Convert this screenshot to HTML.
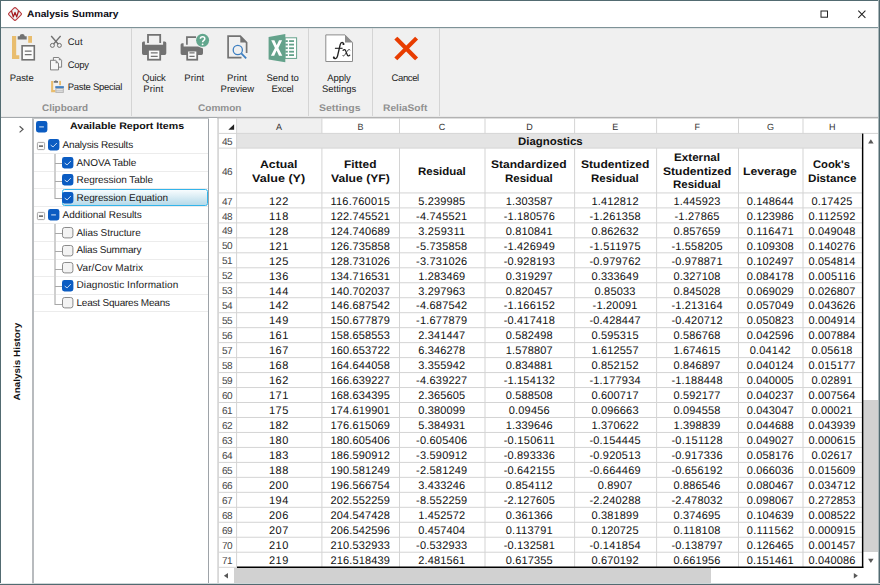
<!DOCTYPE html>
<html><head><meta charset="utf-8"><title>Analysis Summary</title>
<style>
html,body{margin:0;padding:0;}
body{width:880px;height:585px;overflow:hidden;background:#fff;position:relative;font-family:"Liberation Sans",sans-serif;}
.t{position:absolute;white-space:pre;line-height:16px;height:16px;text-rendering:geometricPrecision;}
.r{position:absolute;}
svg{position:absolute;overflow:visible;}
</style></head><body>
<div class="r" style="left:0px;top:0px;width:880px;height:585px;background:#fff;"></div>
<div class="t" style="left:26.60px;top:7px;font-size:9.5px;font-weight:700;color:#0c0c14;transform-origin:0 0;transform:scaleX(1.0763);">Analysis Summary</div>
<svg style="left:0;top:0" width="30" height="28" viewBox="0 0 30 28">
<path d="M13.7 8.3 Q15 7 16.3 8.3 L20.8 12.8 Q22.1 14 20.8 15.2 L16.3 19.7 Q15 21 13.7 19.7 L9.2 15.2 Q7.9 14 9.2 12.8 Z" fill="#edf3f5" stroke="#b9393d" stroke-width="1.15"/>
<path d="M11.5 11 L13.3 16.9 L15 12.4 L16.7 16.9 L18.5 11" fill="none" stroke="#a51a1e" stroke-width="1.25" stroke-linejoin="round"/>
</svg>
<svg style="left:0;top:0" width="880" height="28" viewBox="0 0 880 28"><rect x="821" y="11" width="6.5" height="6.2" fill="none" stroke="#222" stroke-width="1"/><path d="M858.3 10.7 L865.4 17.8 M865.4 10.7 L858.3 17.8" fill="none" stroke="#222" stroke-width="1.05"/></svg>
<div class="r" style="left:1px;top:27px;width:878px;height:1px;background:#7e9297;"></div>
<div class="r" style="left:1px;top:28px;width:878px;height:89px;background:#f0f0f0;"></div>
<div class="r" style="left:1px;top:28px;width:878px;height:1px;background:#dde1e2;"></div>
<div class="r" style="left:131px;top:28px;width:1px;height:89px;background:#d4d4d4;"></div>
<div class="r" style="left:308px;top:28px;width:1px;height:89px;background:#d4d4d4;"></div>
<div class="r" style="left:372px;top:28px;width:1px;height:89px;background:#d4d4d4;"></div>
<div class="r" style="left:439px;top:28px;width:1px;height:89px;background:#d4d4d4;"></div>
<div class="r" style="left:1px;top:116px;width:878px;height:1px;background:#e8e8e8;"></div>
<div class="r" style="left:1px;top:117px;width:878px;height:1px;background:#a6aaad;"></div>
<div class="t" style="left:42.40px;top:101px;font-size:9.5px;font-weight:700;color:#909090;transform-origin:0 0;transform:scaleX(1.0399);">Clipboard</div>
<div class="t" style="left:197.50px;top:101px;font-size:9.5px;font-weight:700;color:#909090;transform-origin:0 0;transform:scaleX(1.0568);">Common</div>
<div class="t" style="left:318.80px;top:101px;font-size:9.5px;font-weight:700;color:#909090;transform-origin:0 0;transform:scaleX(1.1074);">Settings</div>
<div class="t" style="left:383.40px;top:101px;font-size:9.5px;font-weight:700;color:#909090;transform-origin:0 0;transform:scaleX(1.0784);">ReliaSoft</div>
<div class="t" style="left:9.70px;top:71px;font-size:9.5px;font-weight:400;color:#1e1e1e;letter-spacing:-0.073px;">Paste</div>
<div class="t" style="left:67.70px;top:35px;font-size:9.5px;font-weight:400;color:#1e1e1e;letter-spacing:0.058px;">Cut</div>
<div class="t" style="left:67.70px;top:58px;font-size:9.5px;font-weight:400;color:#1e1e1e;letter-spacing:-0.326px;">Copy</div>
<div class="t" style="left:67.70px;top:80px;font-size:9.5px;font-weight:400;color:#1e1e1e;letter-spacing:-0.283px;">Paste Special</div>
<div class="t" style="left:142.30px;top:71px;font-size:9.5px;font-weight:400;color:#1e1e1e;letter-spacing:-0.196px;">Quick</div>
<div class="t" style="left:143.30px;top:82px;font-size:9.5px;font-weight:400;color:#1e1e1e;letter-spacing:0.117px;">Print</div>
<div class="t" style="left:184.20px;top:71px;font-size:9.5px;font-weight:400;color:#1e1e1e;letter-spacing:0.117px;">Print</div>
<div class="t" style="left:227.10px;top:71px;font-size:9.5px;font-weight:400;color:#1e1e1e;letter-spacing:0.092px;">Print</div>
<div class="t" style="left:220.60px;top:82px;font-size:9.5px;font-weight:400;color:#1e1e1e;letter-spacing:-0.048px;">Preview</div>
<div class="t" style="left:266.60px;top:71px;font-size:9.5px;font-weight:400;color:#1e1e1e;letter-spacing:-0.108px;">Send to</div>
<div class="t" style="left:271.50px;top:82px;font-size:9.5px;font-weight:400;color:#1e1e1e;letter-spacing:-0.283px;">Excel</div>
<div class="t" style="left:327.20px;top:71px;font-size:9.5px;font-weight:400;color:#1e1e1e;letter-spacing:-0.066px;">Apply</div>
<div class="t" style="left:321.90px;top:82px;font-size:9.5px;font-weight:400;color:#1e1e1e;letter-spacing:-0.004px;">Settings</div>
<div class="t" style="left:391.60px;top:71px;font-size:9.5px;font-weight:400;color:#1e1e1e;letter-spacing:-0.394px;">Cancel</div>
<svg style="left:0;top:0" width="450" height="118" viewBox="0 0 450 118">
<!-- Paste big -->
<path d="M12 36 H16.2 V55.2 H19.3 V59 H12 Z" fill="#e9bd6e"/>
<rect x="28.2" y="36" width="3.8" height="6.8" fill="#e9bd6e"/>
<path d="M17.7 39.4 V36.2 H19.6 Q19.8 34 22.2 34 Q24.6 34 24.8 36.2 H26.7 V39.4 Z" fill="#727272"/>
<rect x="22.1" y="45.8" width="12.2" height="14" fill="#fbfbfb" stroke="#727272" stroke-width="1.6"/>
<path d="M24.8 51.2 H31.6 M24.8 54.6 H31.6" stroke="#727272" stroke-width="1.2"/>
<!-- scissors -->
<g fill="none" stroke="#6f6f6f" stroke-width="1">
<path d="M51.2 36 L58.2 44" stroke-width="1.3"/>
<path d="M60.6 36 L53.6 44" stroke-width="1.3"/>
<circle cx="52.4" cy="45.4" r="2"/>
<circle cx="59.4" cy="45.4" r="2"/>
</g>
<!-- copy -->
<g fill="#f6f6f6" stroke="#757575" stroke-width="0.9">
<path d="M53.4 57.5 H58.8 L61.6 60.3 V67.2 H53.4 Z"/>
<path d="M58.8 57.5 V60.3 H61.6 Z" fill="#8a8a8a" stroke="none"/>
<path d="M50.5 60.3 H55.6 L58.5 63.2 V69.9 H50.5 Z"/>
<path d="M55.6 60.3 V63.2 H58.5 Z" fill="#8a8a8a" stroke="none"/>
</g>
<!-- paste special -->
<path d="M51.1 80.9 H53.2 V90.1 H55.4 V92.2 H51.1 Z" fill="#e9bd6e"/>
<rect x="59.1" y="80.9" width="1.9" height="4.3" fill="#e9bd6e"/>
<path d="M53.8 82.7 V81 H54.9 Q55.9 79.6 56.9 81 H58 V82.7 Z" fill="#727272"/>
<rect x="55.4" y="86.2" width="8.4" height="6.7" fill="#b4b4b4"/>
<rect x="55.4" y="86.2" width="8.4" height="1.9" fill="#3f7fc4"/>
<rect x="56.4" y="89.1" width="6.4" height="0.8" fill="#f2f2f2"/>
<rect x="56.4" y="90.4" width="6.4" height="1.5" fill="#dedede"/>
<!-- quick print -->
<g>
<path d="M148 42.9 V34.9 H160.2 V42.9" fill="none" stroke="#727272" stroke-width="1.8"/>
<path d="M142 43 Q142 41.4 143.6 41.4 H144.9 V44.8 H163.1 V41.4 H164.7 Q166.3 41.4 166.3 43 V53.3 Q166.3 54.9 164.7 54.9 H143.6 Q142 54.9 142 53.3 Z" fill="#727272"/>
<rect x="148" y="49.7" width="12.2" height="10" fill="#fafafa" stroke="#727272" stroke-width="1.8"/>
<path d="M150.8 52.8 H157.7 M150.8 56.3 H157.7" stroke="#727272" stroke-width="1.3"/>
</g>
<!-- print -->
<g>
<path d="M186.9 44.8 V37.1 H196" fill="none" stroke="#727272" stroke-width="1.7"/>
<path d="M180.6 44.8 Q180.6 43.2 182.2 43.2 H183.6 V46.6 H198 L203 48.6 V53.3 Q203 54.9 201.4 54.9 H182.2 Q180.6 54.9 180.6 53.3 Z" fill="#727272"/>
<rect x="187.2" y="50.6" width="10" height="9.1" fill="#fafafa" stroke="#727272" stroke-width="1.8"/>
<path d="M189.4 52.9 H194.6 M189.4 56.3 H194.6" stroke="#727272" stroke-width="1.3"/>
<circle cx="202.6" cy="40.3" r="6.5" fill="#62a68d"/>
<path d="M200.4 38.7 C200.4 36.1 204.8 36.1 204.8 38.7 C204.8 40.5 202.6 40.4 202.6 42.3" fill="none" stroke="#fff" stroke-width="1.5"/><circle cx="202.6" cy="44.3" r="0.9" fill="#fff"/>
</g>
<!-- print preview -->
<g>
<path d="M246.6 53 V42.5 L240.3 36.2 H228.1 V57.7 H241.5" fill="none" stroke="#737373" stroke-width="1.7" stroke-linejoin="miter"/>
<path d="M240.3 36.2 V42.5 H246.6 Z" fill="#737373"/>
<circle cx="237.8" cy="50" r="4.6" fill="none" stroke="#3d7fc1" stroke-width="1.3"/>
<path d="M241.3 53.4 L246.2 58.3" stroke="#3d7fc1" stroke-width="1.8"/>
</g>
<!-- excel -->
<g>
<rect x="285" y="37.8" width="11.6" height="20.6" fill="#fff" stroke="#64a28b" stroke-width="1"/>
<g fill="#64a28b">
<rect x="285.3" y="40.2" width="2.5" height="1.8"/><rect x="289.1" y="40.2" width="4.9" height="1.8"/>
<rect x="285.3" y="43.7" width="2.5" height="1.8"/><rect x="289.1" y="43.7" width="4.9" height="1.8"/>
<rect x="285.3" y="47.3" width="2.5" height="1.8"/><rect x="289.1" y="47.3" width="4.9" height="1.8"/>
<rect x="285.3" y="50.8" width="2.5" height="1.8"/><rect x="289.1" y="50.8" width="4.9" height="1.8"/>
<rect x="285.3" y="54.2" width="2.5" height="1.8"/><rect x="289.1" y="54.2" width="4.9" height="1.8"/>
<path d="M268.6 37.1 L285.3 34 V62.3 L268.6 59.5 Z"/>
</g>
<path d="M271.2 40.3 H274.4 L276.7 45.3 L279 40.3 H282.1 L278.4 48 L282.3 55.7 H279 L276.6 50.6 L274.2 55.7 H270.9 L274.9 48 Z" fill="#fff"/>
</g>
<!-- fx -->
<g>
<path d="M325.8 34.9 H345 L352.5 42.4 V61.5 H325.8 Z" fill="#fff" stroke="#8c8c8c" stroke-width="1"/>
<path d="M345 34.9 V42.4 H352.5 Z" fill="#8c8c8c"/>
<path d="M343.7 44.2 C343.6 42 340.9 41.5 340.2 44.6 L337.5 56.1 C336.8 59 334.3 59.3 333.6 57.5" fill="none" stroke="#222" stroke-width="1.35" stroke-linecap="round"/>
<circle cx="343.4" cy="44" r="1" fill="#222"/><circle cx="333.9" cy="57.6" r="1" fill="#222"/>
<path d="M334.9 48.3 H342.6" stroke="#222" stroke-width="1.1"/>
<path d="M343.1 50.3 C344.4 49 345.3 49.6 345.9 51.4 L347.1 54.4 C347.7 56 348.6 56.4 349.8 55.1" fill="none" stroke="#222" stroke-width="1.25" stroke-linecap="round"/>
<path d="M350 49.9 C349.2 49 348.2 49.6 347.2 51.2 L345 54.6 C344 56.1 343.2 56.4 342.7 55.5" fill="none" stroke="#222" stroke-width="0.85" stroke-linecap="round"/>
</g>
<!-- cancel -->
<path d="M397.3 39.6 L415.1 57.4 M415.1 39.6 L397.3 57.4" stroke="#e83c00" stroke-width="4.2" stroke-linecap="square"/>
</svg>
<div class="r" style="left:1px;top:118px;width:32px;height:465px;background:#fff;"></div>
<svg style="left:0;top:0" width="40" height="140" viewBox="0 0 40 140"><path d="M19.6 126.3 L23.1 129.3 L19.6 132.4" fill="none" stroke="#555" stroke-width="1.15"/></svg>
<div class="t" style="left:0;top:0;font-size:9px;font-weight:700;color:#111;transform-origin:0 0;transform:translate(9.08px,400.4px) rotate(-90deg) scaleX(1.1003);">Analysis History</div>
<div class="r" style="left:32px;top:118px;width:2px;height:466px;background:#b8bbbe;"></div>
<div class="r" style="left:208px;top:118px;width:1px;height:466px;background:#9ea3a8;"></div>
<div class="r" style="left:32px;top:118px;width:177px;height:1px;background:#c4c7c9;"></div>
<div class="t" style="left:69.80px;top:119px;font-size:9.5px;font-weight:700;color:#111;transform-origin:0 0;transform:scaleX(1.1179);">Available Report Items</div>
<svg style="left:35.5px;top:120.6px" width="11.4" height="11.4" viewBox="0 0 11.4 11.4"><rect x="0" y="0" width="11.4" height="11.4" rx="2.4" fill="#0b5cc2"/><path d="M3.2 5.9 L7.9 5.9" fill="none" stroke="#b9d2f0" stroke-width="1.2"/></svg>
<div class="r" style="left:34px;top:153px;width:174px;height:1px;background:#ececec;"></div>
<svg style="left:37px;top:142.1px" width="8" height="8" viewBox="0 0 8 8"><rect x="0.4" y="0.4" width="7.2" height="7.2" rx="1" fill="#fafafa" stroke="#8e8e8e" stroke-width="0.8"/><path d="M2 4.1 H6" stroke="#333" stroke-width="1.2"/></svg>
<svg style="left:47.5px;top:139.0px" width="11.4" height="11.4" viewBox="0 0 11.4 11.4"><rect x="0" y="0" width="11.4" height="11.4" rx="2.4" fill="#0b5cc2"/><path d="M2.7 6.1 L5.1 7.9 L8.9 4.0" fill="none" stroke="#cfe0f5" stroke-width="0.95"/></svg>
<div class="t" style="left:62.60px;top:138px;font-size:10px;font-weight:400;color:#1a1a1a;letter-spacing:-0.184px;">Analysis Results</div>
<div class="r" style="left:34px;top:171px;width:174px;height:1px;background:#ececec;"></div>
<div class="r" style="left:54px;top:154px;width:2px;height:18px;background:#cfcfcf;"></div>
<div class="r" style="left:55px;top:163px;width:7px;height:1px;background:#a8a8a8;"></div>
<svg style="left:61.7px;top:156.7px" width="11.4" height="11.4" viewBox="0 0 11.4 11.4"><rect x="0" y="0" width="11.4" height="11.4" rx="2.4" fill="#0b5cc2"/><path d="M2.7 6.1 L5.1 7.9 L8.9 4.0" fill="none" stroke="#cfe0f5" stroke-width="0.95"/></svg>
<div class="t" style="left:76.50px;top:156px;font-size:10px;font-weight:400;color:#1a1a1a;letter-spacing:-0.052px;">ANOVA Table</div>
<div class="r" style="left:34px;top:188px;width:174px;height:1px;background:#ececec;"></div>
<div class="r" style="left:54px;top:172px;width:2px;height:18px;background:#cfcfcf;"></div>
<div class="r" style="left:55px;top:181px;width:7px;height:1px;background:#a8a8a8;"></div>
<svg style="left:61.7px;top:174.2px" width="11.4" height="11.4" viewBox="0 0 11.4 11.4"><rect x="0" y="0" width="11.4" height="11.4" rx="2.4" fill="#0b5cc2"/><path d="M2.7 6.1 L5.1 7.9 L8.9 4.0" fill="none" stroke="#cfe0f5" stroke-width="0.95"/></svg>
<div class="t" style="left:76.50px;top:173px;font-size:10px;font-weight:400;color:#1a1a1a;letter-spacing:-0.039px;">Regression Table</div>
<div class="r" style="left:34px;top:206px;width:174px;height:1px;background:#ececec;"></div>
<div class="r" style="left:61.5px;top:189px;width:146.5px;height:17px;background:#cfe6f1;box-sizing:border-box;border:1px solid #33b4ea;border-radius:2.5px;background:linear-gradient(#f8fcfe,#b6dae9);"></div>
<div class="r" style="left:54px;top:189px;width:2px;height:10px;background:#cfcfcf;"></div>
<div class="r" style="left:55px;top:198px;width:7px;height:1px;background:#a8a8a8;"></div>
<svg style="left:61.7px;top:191.8px" width="11.4" height="11.4" viewBox="0 0 11.4 11.4"><rect x="0" y="0" width="11.4" height="11.4" rx="2.4" fill="#0b5cc2"/><path d="M2.7 6.1 L5.1 7.9 L8.9 4.0" fill="none" stroke="#cfe0f5" stroke-width="0.95"/></svg>
<div class="t" style="left:76.50px;top:191px;font-size:10px;font-weight:400;color:#1a1a1a;letter-spacing:-0.074px;">Regression Equation</div>
<div class="r" style="left:34px;top:223px;width:174px;height:1px;background:#ececec;"></div>
<svg style="left:37px;top:212.3px" width="8" height="8" viewBox="0 0 8 8"><rect x="0.4" y="0.4" width="7.2" height="7.2" rx="1" fill="#fafafa" stroke="#8e8e8e" stroke-width="0.8"/><path d="M2 4.1 H6" stroke="#333" stroke-width="1.2"/></svg>
<svg style="left:47.5px;top:209.2px" width="11.4" height="11.4" viewBox="0 0 11.4 11.4"><rect x="0" y="0" width="11.4" height="11.4" rx="2.4" fill="#0b5cc2"/><path d="M3.2 5.9 L7.9 5.9" fill="none" stroke="#b9d2f0" stroke-width="1.2"/></svg>
<div class="t" style="left:62.60px;top:208px;font-size:10px;font-weight:400;color:#1a1a1a;letter-spacing:-0.050px;">Additional Results</div>
<div class="r" style="left:34px;top:241px;width:174px;height:1px;background:#ececec;"></div>
<div class="r" style="left:54px;top:224px;width:2px;height:18px;background:#cfcfcf;"></div>
<div class="r" style="left:55px;top:233px;width:7px;height:1px;background:#a8a8a8;"></div>
<svg style="left:61.7px;top:226.9px" width="11.4" height="11.4" viewBox="0 0 11.4 11.4"><rect x="0.5" y="0.5" width="10.4" height="10.4" rx="2.2" fill="#f3f3f3" stroke="#8a8a8a" stroke-width="1"/></svg>
<div class="t" style="left:76.50px;top:226px;font-size:10px;font-weight:400;color:#1a1a1a;letter-spacing:-0.059px;">Alias Structure</div>
<div class="r" style="left:34px;top:259px;width:174px;height:1px;background:#ececec;"></div>
<div class="r" style="left:54px;top:242px;width:2px;height:18px;background:#cfcfcf;"></div>
<div class="r" style="left:55px;top:251px;width:7px;height:1px;background:#a8a8a8;"></div>
<svg style="left:61.7px;top:244.5px" width="11.4" height="11.4" viewBox="0 0 11.4 11.4"><rect x="0.5" y="0.5" width="10.4" height="10.4" rx="2.2" fill="#f3f3f3" stroke="#8a8a8a" stroke-width="1"/></svg>
<div class="t" style="left:76.50px;top:243px;font-size:10px;font-weight:400;color:#1a1a1a;letter-spacing:-0.195px;">Alias Summary</div>
<div class="r" style="left:34px;top:276px;width:174px;height:1px;background:#ececec;"></div>
<div class="r" style="left:54px;top:260px;width:2px;height:18px;background:#cfcfcf;"></div>
<div class="r" style="left:55px;top:269px;width:7px;height:1px;background:#a8a8a8;"></div>
<svg style="left:61.7px;top:262.0px" width="11.4" height="11.4" viewBox="0 0 11.4 11.4"><rect x="0.5" y="0.5" width="10.4" height="10.4" rx="2.2" fill="#f3f3f3" stroke="#8a8a8a" stroke-width="1"/></svg>
<div class="t" style="left:76.50px;top:261px;font-size:10px;font-weight:400;color:#1a1a1a;letter-spacing:0.086px;">Var/Cov Matrix</div>
<div class="r" style="left:34px;top:294px;width:174px;height:1px;background:#ececec;"></div>
<div class="r" style="left:54px;top:277px;width:2px;height:18px;background:#cfcfcf;"></div>
<div class="r" style="left:55px;top:286px;width:7px;height:1px;background:#a8a8a8;"></div>
<svg style="left:61.7px;top:279.6px" width="11.4" height="11.4" viewBox="0 0 11.4 11.4"><rect x="0" y="0" width="11.4" height="11.4" rx="2.4" fill="#0b5cc2"/><path d="M2.7 6.1 L5.1 7.9 L8.9 4.0" fill="none" stroke="#cfe0f5" stroke-width="0.95"/></svg>
<div class="t" style="left:76.50px;top:278px;font-size:10px;font-weight:400;color:#1a1a1a;letter-spacing:0.105px;">Diagnostic Information</div>
<div class="r" style="left:34px;top:311px;width:174px;height:1px;background:#ececec;"></div>
<div class="r" style="left:54px;top:295px;width:2px;height:10px;background:#cfcfcf;"></div>
<div class="r" style="left:55px;top:304px;width:7px;height:1px;background:#a8a8a8;"></div>
<svg style="left:61.7px;top:297.1px" width="11.4" height="11.4" viewBox="0 0 11.4 11.4"><rect x="0.5" y="0.5" width="10.4" height="10.4" rx="2.2" fill="#f3f3f3" stroke="#8a8a8a" stroke-width="1"/></svg>
<div class="t" style="left:76.50px;top:296px;font-size:10px;font-weight:400;color:#1a1a1a;letter-spacing:-0.210px;">Least Squares Means</div>
<div class="r" style="left:217px;top:117px;width:662px;height:1px;background:#b2b2b2;"></div>
<div class="r" style="left:217px;top:118px;width:662px;height:1px;background:#dedede;"></div>
<div class="r" style="left:219px;top:119px;width:659px;height:14px;background:#fff;"></div>
<div class="r" style="left:237px;top:119px;width:85px;height:14px;background:#f0f0f0;"></div>
<div class="r" style="left:237px;top:134px;width:624px;height:14px;background:#e4e4e4;"></div>
<svg style="left:0;top:0" width="880" height="585" viewBox="0 0 880 585"><rect x="217.55" y="118" width="1" height="466" fill="#b8b8b8"/><rect x="218.5" y="132.90" width="659.5" height="1" fill="#d4d4d4"/><rect x="218.5" y="147.60" width="643.5" height="1" fill="#d4d4d4"/><rect x="236.10" y="118" width="1" height="450" fill="#d4d4d4"/><rect x="321.40" y="118" width="1" height="15.400000000000006" fill="#d4d4d4"/><rect x="321.40" y="148.1" width="1" height="418.9" fill="#d4d4d4"/><rect x="399.00" y="118" width="1" height="15.400000000000006" fill="#d4d4d4"/><rect x="399.00" y="148.1" width="1" height="418.9" fill="#d4d4d4"/><rect x="484.50" y="118" width="1" height="15.400000000000006" fill="#d4d4d4"/><rect x="484.50" y="148.1" width="1" height="418.9" fill="#d4d4d4"/><rect x="574.10" y="118" width="1" height="15.400000000000006" fill="#d4d4d4"/><rect x="574.10" y="148.1" width="1" height="418.9" fill="#d4d4d4"/><rect x="656.10" y="118" width="1" height="15.400000000000006" fill="#d4d4d4"/><rect x="656.10" y="148.1" width="1" height="418.9" fill="#d4d4d4"/><rect x="738.00" y="118" width="1" height="15.400000000000006" fill="#d4d4d4"/><rect x="738.00" y="148.1" width="1" height="418.9" fill="#d4d4d4"/><rect x="802.50" y="118" width="1" height="15.400000000000006" fill="#d4d4d4"/><rect x="802.50" y="148.1" width="1" height="418.9" fill="#d4d4d4"/><rect x="218.5" y="192.43" width="643.5" height="1" fill="#d4d4d4"/><rect x="218.5" y="207.40" width="643.5" height="1" fill="#d4d4d4"/><rect x="218.5" y="222.37" width="643.5" height="1" fill="#d4d4d4"/><rect x="218.5" y="237.34" width="643.5" height="1" fill="#d4d4d4"/><rect x="218.5" y="252.31" width="643.5" height="1" fill="#d4d4d4"/><rect x="218.5" y="267.28" width="643.5" height="1" fill="#d4d4d4"/><rect x="218.5" y="282.25" width="643.5" height="1" fill="#d4d4d4"/><rect x="218.5" y="297.22" width="643.5" height="1" fill="#d4d4d4"/><rect x="218.5" y="312.19" width="643.5" height="1" fill="#d4d4d4"/><rect x="218.5" y="327.16" width="643.5" height="1" fill="#d4d4d4"/><rect x="218.5" y="342.13" width="643.5" height="1" fill="#d4d4d4"/><rect x="218.5" y="357.10" width="643.5" height="1" fill="#d4d4d4"/><rect x="218.5" y="372.07" width="643.5" height="1" fill="#d4d4d4"/><rect x="218.5" y="387.04" width="643.5" height="1" fill="#d4d4d4"/><rect x="218.5" y="402.01" width="643.5" height="1" fill="#d4d4d4"/><rect x="218.5" y="416.98" width="643.5" height="1" fill="#d4d4d4"/><rect x="218.5" y="431.95" width="643.5" height="1" fill="#d4d4d4"/><rect x="218.5" y="446.92" width="643.5" height="1" fill="#d4d4d4"/><rect x="218.5" y="461.89" width="643.5" height="1" fill="#d4d4d4"/><rect x="218.5" y="476.86" width="643.5" height="1" fill="#d4d4d4"/><rect x="218.5" y="491.83" width="643.5" height="1" fill="#d4d4d4"/><rect x="218.5" y="506.80" width="643.5" height="1" fill="#d4d4d4"/><rect x="218.5" y="521.77" width="643.5" height="1" fill="#d4d4d4"/><rect x="218.5" y="536.74" width="643.5" height="1" fill="#d4d4d4"/><rect x="218.5" y="551.71" width="643.5" height="1" fill="#d4d4d4"/><rect x="218.5" y="566.80" width="18.5" height="1" fill="#d4d4d4"/></svg>
<svg style="left:226.5px;top:123px" width="8" height="8" viewBox="0 0 8 8"><path d="M7.1 1.3 L7.1 6.8 L1.3 6.8 Z" fill="#222"/></svg>
<div class="t" style="left:275.95px;top:119px;font-size:9px;font-weight:400;color:#333;">A</div>
<div class="t" style="left:357.40px;top:119px;font-size:9px;font-weight:400;color:#333;">B</div>
<div class="t" style="left:438.70px;top:119px;font-size:9px;font-weight:400;color:#333;">C</div>
<div class="t" style="left:526.25px;top:119px;font-size:9px;font-weight:400;color:#333;">D</div>
<div class="t" style="left:612.30px;top:119px;font-size:9px;font-weight:400;color:#333;">E</div>
<div class="t" style="left:694.50px;top:119px;font-size:9px;font-weight:400;color:#333;">F</div>
<div class="t" style="left:766.95px;top:119px;font-size:9px;font-weight:400;color:#333;">G</div>
<div class="t" style="left:828.95px;top:119px;font-size:9px;font-weight:400;color:#333;">H</div>
<div class="t" style="left:517.50px;top:134px;font-size:11px;font-weight:700;color:#111;transform-origin:0 0;transform:scaleX(1.0377);">Diagnostics</div>
<div class="t" style="left:222.00px;top:135px;font-size:10px;font-weight:400;color:#444;letter-spacing:-0.523px;">45</div>
<div class="t" style="left:222.00px;top:165px;font-size:10px;font-weight:400;color:#444;letter-spacing:-0.523px;">46</div>
<div class="t" style="left:259.75px;top:157px;font-size:11px;font-weight:700;color:#111;transform-origin:0 0;transform:scaleX(1.1125);">Actual</div>
<div class="t" style="left:251.85px;top:171px;font-size:11px;font-weight:700;color:#111;transform-origin:0 0;transform:scaleX(1.1451);">Value (Y)</div>
<div class="t" style="left:343.70px;top:157px;font-size:11px;font-weight:700;color:#111;transform-origin:0 0;transform:scaleX(1.0822);">Fitted</div>
<div class="t" style="left:330.50px;top:171px;font-size:11px;font-weight:700;color:#111;transform-origin:0 0;transform:scaleX(1.1057);">Value (YF)</div>
<div class="t" style="left:417.55px;top:164px;font-size:11px;font-weight:700;color:#111;transform-origin:0 0;transform:scaleX(1.0426);">Residual</div>
<div class="t" style="left:491.20px;top:157px;font-size:11px;font-weight:700;color:#111;transform-origin:0 0;transform:scaleX(1.0946);">Standardized</div>
<div class="t" style="left:505.10px;top:171px;font-size:11px;font-weight:700;color:#111;transform-origin:0 0;transform:scaleX(1.0426);">Residual</div>
<div class="t" style="left:580.60px;top:157px;font-size:11px;font-weight:700;color:#111;transform-origin:0 0;transform:scaleX(1.0973);">Studentized</div>
<div class="t" style="left:590.90px;top:171px;font-size:11px;font-weight:700;color:#111;transform-origin:0 0;transform:scaleX(1.0426);">Residual</div>
<div class="t" style="left:673.75px;top:150px;font-size:11px;font-weight:700;color:#111;transform-origin:0 0;transform:scaleX(1.0597);">External</div>
<div class="t" style="left:662.55px;top:164px;font-size:11px;font-weight:700;color:#111;transform-origin:0 0;transform:scaleX(1.0973);">Studentized</div>
<div class="t" style="left:672.85px;top:177px;font-size:11px;font-weight:700;color:#111;transform-origin:0 0;transform:scaleX(1.0426);">Residual</div>
<div class="t" style="left:743.10px;top:164px;font-size:11px;font-weight:700;color:#111;transform-origin:0 0;transform:scaleX(1.1116);">Leverage</div>
<div class="t" style="left:813.20px;top:157px;font-size:11px;font-weight:700;color:#111;transform-origin:0 0;transform:scaleX(1.0212);">Cook's</div>
<div class="t" style="left:807.50px;top:171px;font-size:11px;font-weight:700;color:#111;transform-origin:0 0;transform:scaleX(1.0555);">Distance</div>
<div class="t" style="left:222.00px;top:195px;font-size:10px;font-weight:400;color:#444;letter-spacing:-0.523px;">47</div>
<div class="t" style="left:268.97px;top:194px;font-size:11px;font-weight:400;color:#111;letter-spacing:0.498px;">122</div>
<div class="t" style="left:330.44px;top:194px;font-size:11px;font-weight:400;color:#111;letter-spacing:0.225px;">116.760015</div>
<div class="t" style="left:418.14px;top:194px;font-size:11px;font-weight:400;color:#111;letter-spacing:0.164px;">5.239985</div>
<div class="t" style="left:505.69px;top:194px;font-size:11px;font-weight:400;color:#111;letter-spacing:0.164px;">1.303587</div>
<div class="t" style="left:591.49px;top:194px;font-size:11px;font-weight:400;color:#111;letter-spacing:0.164px;">1.412812</div>
<div class="t" style="left:673.44px;top:194px;font-size:11px;font-weight:400;color:#111;letter-spacing:0.164px;">1.445923</div>
<div class="t" style="left:746.64px;top:194px;font-size:11px;font-weight:400;color:#111;letter-spacing:0.164px;">0.148644</div>
<div class="t" style="left:811.46px;top:194px;font-size:11px;font-weight:400;color:#111;letter-spacing:0.185px;">0.17425</div>
<div class="t" style="left:222.00px;top:210px;font-size:10px;font-weight:400;color:#444;letter-spacing:-0.523px;">48</div>
<div class="t" style="left:268.97px;top:209px;font-size:11px;font-weight:400;color:#111;letter-spacing:0.907px;">118</div>
<div class="t" style="left:330.44px;top:209px;font-size:11px;font-weight:400;color:#111;letter-spacing:0.134px;">122.745521</div>
<div class="t" style="left:416.09px;top:209px;font-size:11px;font-weight:400;color:#111;letter-spacing:0.198px;">-4.745521</div>
<div class="t" style="left:503.64px;top:209px;font-size:11px;font-weight:400;color:#111;letter-spacing:0.198px;">-1.180576</div>
<div class="t" style="left:589.44px;top:209px;font-size:11px;font-weight:400;color:#111;letter-spacing:0.198px;">-1.261358</div>
<div class="t" style="left:674.46px;top:209px;font-size:11px;font-weight:400;color:#111;letter-spacing:0.221px;">-1.27865</div>
<div class="t" style="left:746.64px;top:209px;font-size:11px;font-weight:400;color:#111;letter-spacing:0.164px;">0.123986</div>
<div class="t" style="left:808.39px;top:209px;font-size:11px;font-weight:400;color:#111;letter-spacing:0.280px;">0.112592</div>
<div class="t" style="left:222.00px;top:224px;font-size:10px;font-weight:400;color:#444;letter-spacing:-0.523px;">49</div>
<div class="t" style="left:268.97px;top:224px;font-size:11px;font-weight:400;color:#111;letter-spacing:0.498px;">128</div>
<div class="t" style="left:330.44px;top:224px;font-size:11px;font-weight:400;color:#111;letter-spacing:0.134px;">124.740689</div>
<div class="t" style="left:418.14px;top:224px;font-size:11px;font-weight:400;color:#111;letter-spacing:0.280px;">3.259311</div>
<div class="t" style="left:505.69px;top:224px;font-size:11px;font-weight:400;color:#111;letter-spacing:0.164px;">0.810841</div>
<div class="t" style="left:591.49px;top:224px;font-size:11px;font-weight:400;color:#111;letter-spacing:0.164px;">0.862632</div>
<div class="t" style="left:673.44px;top:224px;font-size:11px;font-weight:400;color:#111;letter-spacing:0.164px;">0.857659</div>
<div class="t" style="left:746.64px;top:224px;font-size:11px;font-weight:400;color:#111;letter-spacing:0.280px;">0.116471</div>
<div class="t" style="left:808.39px;top:224px;font-size:11px;font-weight:400;color:#111;letter-spacing:0.164px;">0.049048</div>
<div class="t" style="left:222.00px;top:239px;font-size:10px;font-weight:400;color:#444;letter-spacing:-0.523px;">50</div>
<div class="t" style="left:268.97px;top:239px;font-size:11px;font-weight:400;color:#111;letter-spacing:0.498px;">121</div>
<div class="t" style="left:330.44px;top:239px;font-size:11px;font-weight:400;color:#111;letter-spacing:0.134px;">126.735858</div>
<div class="t" style="left:416.09px;top:239px;font-size:11px;font-weight:400;color:#111;letter-spacing:0.198px;">-5.735858</div>
<div class="t" style="left:503.64px;top:239px;font-size:11px;font-weight:400;color:#111;letter-spacing:0.198px;">-1.426949</div>
<div class="t" style="left:589.44px;top:239px;font-size:11px;font-weight:400;color:#111;letter-spacing:0.300px;">-1.511975</div>
<div class="t" style="left:671.39px;top:239px;font-size:11px;font-weight:400;color:#111;letter-spacing:0.198px;">-1.558205</div>
<div class="t" style="left:746.64px;top:239px;font-size:11px;font-weight:400;color:#111;letter-spacing:0.164px;">0.109308</div>
<div class="t" style="left:808.39px;top:239px;font-size:11px;font-weight:400;color:#111;letter-spacing:0.164px;">0.140276</div>
<div class="t" style="left:222.00px;top:254px;font-size:10px;font-weight:400;color:#444;letter-spacing:-0.523px;">51</div>
<div class="t" style="left:268.97px;top:254px;font-size:11px;font-weight:400;color:#111;letter-spacing:0.498px;">125</div>
<div class="t" style="left:330.44px;top:254px;font-size:11px;font-weight:400;color:#111;letter-spacing:0.134px;">128.731026</div>
<div class="t" style="left:416.09px;top:254px;font-size:11px;font-weight:400;color:#111;letter-spacing:0.198px;">-3.731026</div>
<div class="t" style="left:503.64px;top:254px;font-size:11px;font-weight:400;color:#111;letter-spacing:0.198px;">-0.928193</div>
<div class="t" style="left:589.44px;top:254px;font-size:11px;font-weight:400;color:#111;letter-spacing:0.198px;">-0.979762</div>
<div class="t" style="left:671.39px;top:254px;font-size:11px;font-weight:400;color:#111;letter-spacing:0.198px;">-0.978871</div>
<div class="t" style="left:746.64px;top:254px;font-size:11px;font-weight:400;color:#111;letter-spacing:0.164px;">0.102497</div>
<div class="t" style="left:808.39px;top:254px;font-size:11px;font-weight:400;color:#111;letter-spacing:0.164px;">0.054814</div>
<div class="t" style="left:222.00px;top:269px;font-size:10px;font-weight:400;color:#444;letter-spacing:-0.523px;">52</div>
<div class="t" style="left:268.97px;top:269px;font-size:11px;font-weight:400;color:#111;letter-spacing:0.498px;">136</div>
<div class="t" style="left:330.44px;top:269px;font-size:11px;font-weight:400;color:#111;letter-spacing:0.134px;">134.716531</div>
<div class="t" style="left:418.14px;top:269px;font-size:11px;font-weight:400;color:#111;letter-spacing:0.164px;">1.283469</div>
<div class="t" style="left:505.69px;top:269px;font-size:11px;font-weight:400;color:#111;letter-spacing:0.164px;">0.319297</div>
<div class="t" style="left:591.49px;top:269px;font-size:11px;font-weight:400;color:#111;letter-spacing:0.164px;">0.333649</div>
<div class="t" style="left:673.44px;top:269px;font-size:11px;font-weight:400;color:#111;letter-spacing:0.164px;">0.327108</div>
<div class="t" style="left:746.64px;top:269px;font-size:11px;font-weight:400;color:#111;letter-spacing:0.164px;">0.084178</div>
<div class="t" style="left:808.39px;top:269px;font-size:11px;font-weight:400;color:#111;letter-spacing:0.280px;">0.005116</div>
<div class="t" style="left:222.00px;top:284px;font-size:10px;font-weight:400;color:#444;letter-spacing:-0.523px;">53</div>
<div class="t" style="left:268.97px;top:284px;font-size:11px;font-weight:400;color:#111;letter-spacing:0.498px;">144</div>
<div class="t" style="left:330.44px;top:284px;font-size:11px;font-weight:400;color:#111;letter-spacing:0.134px;">140.702037</div>
<div class="t" style="left:418.14px;top:284px;font-size:11px;font-weight:400;color:#111;letter-spacing:0.164px;">3.297963</div>
<div class="t" style="left:505.69px;top:284px;font-size:11px;font-weight:400;color:#111;letter-spacing:0.164px;">0.820457</div>
<div class="t" style="left:594.56px;top:284px;font-size:11px;font-weight:400;color:#111;letter-spacing:0.185px;">0.85033</div>
<div class="t" style="left:673.44px;top:284px;font-size:11px;font-weight:400;color:#111;letter-spacing:0.164px;">0.845028</div>
<div class="t" style="left:746.64px;top:284px;font-size:11px;font-weight:400;color:#111;letter-spacing:0.164px;">0.069029</div>
<div class="t" style="left:808.39px;top:284px;font-size:11px;font-weight:400;color:#111;letter-spacing:0.164px;">0.026807</div>
<div class="t" style="left:222.00px;top:299px;font-size:10px;font-weight:400;color:#444;letter-spacing:-0.523px;">54</div>
<div class="t" style="left:268.97px;top:298px;font-size:11px;font-weight:400;color:#111;letter-spacing:0.498px;">142</div>
<div class="t" style="left:330.44px;top:298px;font-size:11px;font-weight:400;color:#111;letter-spacing:0.134px;">146.687542</div>
<div class="t" style="left:416.09px;top:298px;font-size:11px;font-weight:400;color:#111;letter-spacing:0.198px;">-4.687542</div>
<div class="t" style="left:503.64px;top:298px;font-size:11px;font-weight:400;color:#111;letter-spacing:0.198px;">-1.166152</div>
<div class="t" style="left:592.51px;top:298px;font-size:11px;font-weight:400;color:#111;letter-spacing:0.221px;">-1.20091</div>
<div class="t" style="left:671.39px;top:298px;font-size:11px;font-weight:400;color:#111;letter-spacing:0.198px;">-1.213164</div>
<div class="t" style="left:746.64px;top:298px;font-size:11px;font-weight:400;color:#111;letter-spacing:0.164px;">0.057049</div>
<div class="t" style="left:808.39px;top:298px;font-size:11px;font-weight:400;color:#111;letter-spacing:0.164px;">0.043626</div>
<div class="t" style="left:222.00px;top:314px;font-size:10px;font-weight:400;color:#444;letter-spacing:-0.523px;">55</div>
<div class="t" style="left:268.97px;top:313px;font-size:11px;font-weight:400;color:#111;letter-spacing:0.498px;">149</div>
<div class="t" style="left:330.44px;top:313px;font-size:11px;font-weight:400;color:#111;letter-spacing:0.134px;">150.677879</div>
<div class="t" style="left:416.09px;top:313px;font-size:11px;font-weight:400;color:#111;letter-spacing:0.198px;">-1.677879</div>
<div class="t" style="left:503.64px;top:313px;font-size:11px;font-weight:400;color:#111;letter-spacing:0.198px;">-0.417418</div>
<div class="t" style="left:589.44px;top:313px;font-size:11px;font-weight:400;color:#111;letter-spacing:0.198px;">-0.428447</div>
<div class="t" style="left:671.39px;top:313px;font-size:11px;font-weight:400;color:#111;letter-spacing:0.198px;">-0.420712</div>
<div class="t" style="left:746.64px;top:313px;font-size:11px;font-weight:400;color:#111;letter-spacing:0.164px;">0.050823</div>
<div class="t" style="left:808.39px;top:313px;font-size:11px;font-weight:400;color:#111;letter-spacing:0.164px;">0.004914</div>
<div class="t" style="left:222.00px;top:329px;font-size:10px;font-weight:400;color:#444;letter-spacing:-0.523px;">56</div>
<div class="t" style="left:268.97px;top:328px;font-size:11px;font-weight:400;color:#111;letter-spacing:0.498px;">161</div>
<div class="t" style="left:330.44px;top:328px;font-size:11px;font-weight:400;color:#111;letter-spacing:0.134px;">158.658553</div>
<div class="t" style="left:418.14px;top:328px;font-size:11px;font-weight:400;color:#111;letter-spacing:0.164px;">2.341447</div>
<div class="t" style="left:505.69px;top:328px;font-size:11px;font-weight:400;color:#111;letter-spacing:0.164px;">0.582498</div>
<div class="t" style="left:591.49px;top:328px;font-size:11px;font-weight:400;color:#111;letter-spacing:0.164px;">0.595315</div>
<div class="t" style="left:673.44px;top:328px;font-size:11px;font-weight:400;color:#111;letter-spacing:0.164px;">0.586768</div>
<div class="t" style="left:746.64px;top:328px;font-size:11px;font-weight:400;color:#111;letter-spacing:0.164px;">0.042596</div>
<div class="t" style="left:808.39px;top:328px;font-size:11px;font-weight:400;color:#111;letter-spacing:0.164px;">0.007884</div>
<div class="t" style="left:222.00px;top:344px;font-size:10px;font-weight:400;color:#444;letter-spacing:-0.523px;">57</div>
<div class="t" style="left:268.97px;top:343px;font-size:11px;font-weight:400;color:#111;letter-spacing:0.498px;">167</div>
<div class="t" style="left:330.44px;top:343px;font-size:11px;font-weight:400;color:#111;letter-spacing:0.134px;">160.653722</div>
<div class="t" style="left:418.14px;top:343px;font-size:11px;font-weight:400;color:#111;letter-spacing:0.164px;">6.346278</div>
<div class="t" style="left:505.69px;top:343px;font-size:11px;font-weight:400;color:#111;letter-spacing:0.164px;">1.578807</div>
<div class="t" style="left:591.49px;top:343px;font-size:11px;font-weight:400;color:#111;letter-spacing:0.164px;">1.612557</div>
<div class="t" style="left:673.44px;top:343px;font-size:11px;font-weight:400;color:#111;letter-spacing:0.164px;">1.674615</div>
<div class="t" style="left:749.71px;top:343px;font-size:11px;font-weight:400;color:#111;letter-spacing:0.185px;">0.04142</div>
<div class="t" style="left:811.46px;top:343px;font-size:11px;font-weight:400;color:#111;letter-spacing:0.185px;">0.05618</div>
<div class="t" style="left:222.00px;top:359px;font-size:10px;font-weight:400;color:#444;letter-spacing:-0.523px;">58</div>
<div class="t" style="left:268.97px;top:358px;font-size:11px;font-weight:400;color:#111;letter-spacing:0.498px;">168</div>
<div class="t" style="left:330.44px;top:358px;font-size:11px;font-weight:400;color:#111;letter-spacing:0.134px;">164.644058</div>
<div class="t" style="left:418.14px;top:358px;font-size:11px;font-weight:400;color:#111;letter-spacing:0.164px;">3.355942</div>
<div class="t" style="left:505.69px;top:358px;font-size:11px;font-weight:400;color:#111;letter-spacing:0.164px;">0.834881</div>
<div class="t" style="left:591.49px;top:358px;font-size:11px;font-weight:400;color:#111;letter-spacing:0.164px;">0.852152</div>
<div class="t" style="left:673.44px;top:358px;font-size:11px;font-weight:400;color:#111;letter-spacing:0.164px;">0.846897</div>
<div class="t" style="left:746.64px;top:358px;font-size:11px;font-weight:400;color:#111;letter-spacing:0.164px;">0.040124</div>
<div class="t" style="left:808.39px;top:358px;font-size:11px;font-weight:400;color:#111;letter-spacing:0.164px;">0.015177</div>
<div class="t" style="left:222.00px;top:374px;font-size:10px;font-weight:400;color:#444;letter-spacing:-0.523px;">59</div>
<div class="t" style="left:268.97px;top:373px;font-size:11px;font-weight:400;color:#111;letter-spacing:0.498px;">162</div>
<div class="t" style="left:330.44px;top:373px;font-size:11px;font-weight:400;color:#111;letter-spacing:0.134px;">166.639227</div>
<div class="t" style="left:416.09px;top:373px;font-size:11px;font-weight:400;color:#111;letter-spacing:0.198px;">-4.639227</div>
<div class="t" style="left:503.64px;top:373px;font-size:11px;font-weight:400;color:#111;letter-spacing:0.198px;">-1.154132</div>
<div class="t" style="left:589.44px;top:373px;font-size:11px;font-weight:400;color:#111;letter-spacing:0.198px;">-1.177934</div>
<div class="t" style="left:671.39px;top:373px;font-size:11px;font-weight:400;color:#111;letter-spacing:0.198px;">-1.188448</div>
<div class="t" style="left:746.64px;top:373px;font-size:11px;font-weight:400;color:#111;letter-spacing:0.164px;">0.040005</div>
<div class="t" style="left:811.46px;top:373px;font-size:11px;font-weight:400;color:#111;letter-spacing:0.185px;">0.02891</div>
<div class="t" style="left:222.00px;top:389px;font-size:10px;font-weight:400;color:#444;letter-spacing:-0.523px;">60</div>
<div class="t" style="left:268.97px;top:388px;font-size:11px;font-weight:400;color:#111;letter-spacing:0.498px;">171</div>
<div class="t" style="left:330.44px;top:388px;font-size:11px;font-weight:400;color:#111;letter-spacing:0.134px;">168.634395</div>
<div class="t" style="left:418.14px;top:388px;font-size:11px;font-weight:400;color:#111;letter-spacing:0.164px;">2.365605</div>
<div class="t" style="left:505.69px;top:388px;font-size:11px;font-weight:400;color:#111;letter-spacing:0.164px;">0.588508</div>
<div class="t" style="left:591.49px;top:388px;font-size:11px;font-weight:400;color:#111;letter-spacing:0.164px;">0.600717</div>
<div class="t" style="left:673.44px;top:388px;font-size:11px;font-weight:400;color:#111;letter-spacing:0.164px;">0.592177</div>
<div class="t" style="left:746.64px;top:388px;font-size:11px;font-weight:400;color:#111;letter-spacing:0.164px;">0.040237</div>
<div class="t" style="left:808.39px;top:388px;font-size:11px;font-weight:400;color:#111;letter-spacing:0.164px;">0.007564</div>
<div class="t" style="left:222.00px;top:404px;font-size:10px;font-weight:400;color:#444;letter-spacing:-0.523px;">61</div>
<div class="t" style="left:268.97px;top:403px;font-size:11px;font-weight:400;color:#111;letter-spacing:0.498px;">175</div>
<div class="t" style="left:330.44px;top:403px;font-size:11px;font-weight:400;color:#111;letter-spacing:0.134px;">174.619901</div>
<div class="t" style="left:418.14px;top:403px;font-size:11px;font-weight:400;color:#111;letter-spacing:0.164px;">0.380099</div>
<div class="t" style="left:508.76px;top:403px;font-size:11px;font-weight:400;color:#111;letter-spacing:0.185px;">0.09456</div>
<div class="t" style="left:591.49px;top:403px;font-size:11px;font-weight:400;color:#111;letter-spacing:0.164px;">0.096663</div>
<div class="t" style="left:673.44px;top:403px;font-size:11px;font-weight:400;color:#111;letter-spacing:0.164px;">0.094558</div>
<div class="t" style="left:746.64px;top:403px;font-size:11px;font-weight:400;color:#111;letter-spacing:0.164px;">0.043047</div>
<div class="t" style="left:811.46px;top:403px;font-size:11px;font-weight:400;color:#111;letter-spacing:0.185px;">0.00021</div>
<div class="t" style="left:222.00px;top:419px;font-size:10px;font-weight:400;color:#444;letter-spacing:-0.523px;">62</div>
<div class="t" style="left:268.97px;top:418px;font-size:11px;font-weight:400;color:#111;letter-spacing:0.498px;">182</div>
<div class="t" style="left:330.44px;top:418px;font-size:11px;font-weight:400;color:#111;letter-spacing:0.134px;">176.615069</div>
<div class="t" style="left:418.14px;top:418px;font-size:11px;font-weight:400;color:#111;letter-spacing:0.164px;">5.384931</div>
<div class="t" style="left:505.69px;top:418px;font-size:11px;font-weight:400;color:#111;letter-spacing:0.164px;">1.339646</div>
<div class="t" style="left:591.49px;top:418px;font-size:11px;font-weight:400;color:#111;letter-spacing:0.164px;">1.370622</div>
<div class="t" style="left:673.44px;top:418px;font-size:11px;font-weight:400;color:#111;letter-spacing:0.164px;">1.398839</div>
<div class="t" style="left:746.64px;top:418px;font-size:11px;font-weight:400;color:#111;letter-spacing:0.164px;">0.044688</div>
<div class="t" style="left:808.39px;top:418px;font-size:11px;font-weight:400;color:#111;letter-spacing:0.164px;">0.043939</div>
<div class="t" style="left:222.00px;top:434px;font-size:10px;font-weight:400;color:#444;letter-spacing:-0.523px;">63</div>
<div class="t" style="left:268.97px;top:433px;font-size:11px;font-weight:400;color:#111;letter-spacing:0.498px;">180</div>
<div class="t" style="left:330.44px;top:433px;font-size:11px;font-weight:400;color:#111;letter-spacing:0.134px;">180.605406</div>
<div class="t" style="left:416.09px;top:433px;font-size:11px;font-weight:400;color:#111;letter-spacing:0.198px;">-0.605406</div>
<div class="t" style="left:503.64px;top:433px;font-size:11px;font-weight:400;color:#111;letter-spacing:0.300px;">-0.150611</div>
<div class="t" style="left:589.44px;top:433px;font-size:11px;font-weight:400;color:#111;letter-spacing:0.198px;">-0.154445</div>
<div class="t" style="left:671.39px;top:433px;font-size:11px;font-weight:400;color:#111;letter-spacing:0.300px;">-0.151128</div>
<div class="t" style="left:746.64px;top:433px;font-size:11px;font-weight:400;color:#111;letter-spacing:0.164px;">0.049027</div>
<div class="t" style="left:808.39px;top:433px;font-size:11px;font-weight:400;color:#111;letter-spacing:0.164px;">0.000615</div>
<div class="t" style="left:222.00px;top:449px;font-size:10px;font-weight:400;color:#444;letter-spacing:-0.523px;">64</div>
<div class="t" style="left:268.97px;top:448px;font-size:11px;font-weight:400;color:#111;letter-spacing:0.498px;">183</div>
<div class="t" style="left:330.44px;top:448px;font-size:11px;font-weight:400;color:#111;letter-spacing:0.134px;">186.590912</div>
<div class="t" style="left:416.09px;top:448px;font-size:11px;font-weight:400;color:#111;letter-spacing:0.198px;">-3.590912</div>
<div class="t" style="left:503.64px;top:448px;font-size:11px;font-weight:400;color:#111;letter-spacing:0.198px;">-0.893336</div>
<div class="t" style="left:589.44px;top:448px;font-size:11px;font-weight:400;color:#111;letter-spacing:0.198px;">-0.920513</div>
<div class="t" style="left:671.39px;top:448px;font-size:11px;font-weight:400;color:#111;letter-spacing:0.198px;">-0.917336</div>
<div class="t" style="left:746.64px;top:448px;font-size:11px;font-weight:400;color:#111;letter-spacing:0.164px;">0.058176</div>
<div class="t" style="left:811.46px;top:448px;font-size:11px;font-weight:400;color:#111;letter-spacing:0.185px;">0.02617</div>
<div class="t" style="left:222.00px;top:464px;font-size:10px;font-weight:400;color:#444;letter-spacing:-0.523px;">65</div>
<div class="t" style="left:268.97px;top:463px;font-size:11px;font-weight:400;color:#111;letter-spacing:0.498px;">188</div>
<div class="t" style="left:330.44px;top:463px;font-size:11px;font-weight:400;color:#111;letter-spacing:0.134px;">190.581249</div>
<div class="t" style="left:416.09px;top:463px;font-size:11px;font-weight:400;color:#111;letter-spacing:0.198px;">-2.581249</div>
<div class="t" style="left:503.64px;top:463px;font-size:11px;font-weight:400;color:#111;letter-spacing:0.198px;">-0.642155</div>
<div class="t" style="left:589.44px;top:463px;font-size:11px;font-weight:400;color:#111;letter-spacing:0.198px;">-0.664469</div>
<div class="t" style="left:671.39px;top:463px;font-size:11px;font-weight:400;color:#111;letter-spacing:0.198px;">-0.656192</div>
<div class="t" style="left:746.64px;top:463px;font-size:11px;font-weight:400;color:#111;letter-spacing:0.164px;">0.066036</div>
<div class="t" style="left:808.39px;top:463px;font-size:11px;font-weight:400;color:#111;letter-spacing:0.164px;">0.015609</div>
<div class="t" style="left:222.00px;top:479px;font-size:10px;font-weight:400;color:#444;letter-spacing:-0.523px;">66</div>
<div class="t" style="left:268.97px;top:478px;font-size:11px;font-weight:400;color:#111;letter-spacing:0.498px;">200</div>
<div class="t" style="left:330.44px;top:478px;font-size:11px;font-weight:400;color:#111;letter-spacing:0.134px;">196.566754</div>
<div class="t" style="left:418.14px;top:478px;font-size:11px;font-weight:400;color:#111;letter-spacing:0.164px;">3.433246</div>
<div class="t" style="left:505.69px;top:478px;font-size:11px;font-weight:400;color:#111;letter-spacing:0.280px;">0.854112</div>
<div class="t" style="left:597.64px;top:478px;font-size:11px;font-weight:400;color:#111;letter-spacing:0.216px;">0.8907</div>
<div class="t" style="left:673.44px;top:478px;font-size:11px;font-weight:400;color:#111;letter-spacing:0.164px;">0.886546</div>
<div class="t" style="left:746.64px;top:478px;font-size:11px;font-weight:400;color:#111;letter-spacing:0.164px;">0.080467</div>
<div class="t" style="left:808.39px;top:478px;font-size:11px;font-weight:400;color:#111;letter-spacing:0.164px;">0.034712</div>
<div class="t" style="left:222.00px;top:494px;font-size:10px;font-weight:400;color:#444;letter-spacing:-0.523px;">67</div>
<div class="t" style="left:268.97px;top:493px;font-size:11px;font-weight:400;color:#111;letter-spacing:0.498px;">194</div>
<div class="t" style="left:330.44px;top:493px;font-size:11px;font-weight:400;color:#111;letter-spacing:0.134px;">202.552259</div>
<div class="t" style="left:416.09px;top:493px;font-size:11px;font-weight:400;color:#111;letter-spacing:0.198px;">-8.552259</div>
<div class="t" style="left:503.64px;top:493px;font-size:11px;font-weight:400;color:#111;letter-spacing:0.198px;">-2.127605</div>
<div class="t" style="left:589.44px;top:493px;font-size:11px;font-weight:400;color:#111;letter-spacing:0.198px;">-2.240288</div>
<div class="t" style="left:671.39px;top:493px;font-size:11px;font-weight:400;color:#111;letter-spacing:0.198px;">-2.478032</div>
<div class="t" style="left:746.64px;top:493px;font-size:11px;font-weight:400;color:#111;letter-spacing:0.164px;">0.098067</div>
<div class="t" style="left:808.39px;top:493px;font-size:11px;font-weight:400;color:#111;letter-spacing:0.164px;">0.272853</div>
<div class="t" style="left:222.00px;top:509px;font-size:10px;font-weight:400;color:#444;letter-spacing:-0.523px;">68</div>
<div class="t" style="left:268.97px;top:508px;font-size:11px;font-weight:400;color:#111;letter-spacing:0.498px;">206</div>
<div class="t" style="left:330.44px;top:508px;font-size:11px;font-weight:400;color:#111;letter-spacing:0.134px;">204.547428</div>
<div class="t" style="left:418.14px;top:508px;font-size:11px;font-weight:400;color:#111;letter-spacing:0.164px;">1.452572</div>
<div class="t" style="left:505.69px;top:508px;font-size:11px;font-weight:400;color:#111;letter-spacing:0.164px;">0.361366</div>
<div class="t" style="left:591.49px;top:508px;font-size:11px;font-weight:400;color:#111;letter-spacing:0.164px;">0.381899</div>
<div class="t" style="left:673.44px;top:508px;font-size:11px;font-weight:400;color:#111;letter-spacing:0.164px;">0.374695</div>
<div class="t" style="left:746.64px;top:508px;font-size:11px;font-weight:400;color:#111;letter-spacing:0.164px;">0.104639</div>
<div class="t" style="left:808.39px;top:508px;font-size:11px;font-weight:400;color:#111;letter-spacing:0.164px;">0.008522</div>
<div class="t" style="left:222.00px;top:524px;font-size:10px;font-weight:400;color:#444;letter-spacing:-0.523px;">69</div>
<div class="t" style="left:268.97px;top:523px;font-size:11px;font-weight:400;color:#111;letter-spacing:0.498px;">207</div>
<div class="t" style="left:330.44px;top:523px;font-size:11px;font-weight:400;color:#111;letter-spacing:0.134px;">206.542596</div>
<div class="t" style="left:418.14px;top:523px;font-size:11px;font-weight:400;color:#111;letter-spacing:0.164px;">0.457404</div>
<div class="t" style="left:505.69px;top:523px;font-size:11px;font-weight:400;color:#111;letter-spacing:0.280px;">0.113791</div>
<div class="t" style="left:591.49px;top:523px;font-size:11px;font-weight:400;color:#111;letter-spacing:0.164px;">0.120725</div>
<div class="t" style="left:673.44px;top:523px;font-size:11px;font-weight:400;color:#111;letter-spacing:0.280px;">0.118108</div>
<div class="t" style="left:746.64px;top:523px;font-size:11px;font-weight:400;color:#111;letter-spacing:0.397px;">0.111562</div>
<div class="t" style="left:808.39px;top:523px;font-size:11px;font-weight:400;color:#111;letter-spacing:0.164px;">0.000915</div>
<div class="t" style="left:222.00px;top:539px;font-size:10px;font-weight:400;color:#444;letter-spacing:-0.523px;">70</div>
<div class="t" style="left:268.97px;top:538px;font-size:11px;font-weight:400;color:#111;letter-spacing:0.498px;">210</div>
<div class="t" style="left:330.44px;top:538px;font-size:11px;font-weight:400;color:#111;letter-spacing:0.134px;">210.532933</div>
<div class="t" style="left:416.09px;top:538px;font-size:11px;font-weight:400;color:#111;letter-spacing:0.198px;">-0.532933</div>
<div class="t" style="left:503.64px;top:538px;font-size:11px;font-weight:400;color:#111;letter-spacing:0.198px;">-0.132581</div>
<div class="t" style="left:589.44px;top:538px;font-size:11px;font-weight:400;color:#111;letter-spacing:0.198px;">-0.141854</div>
<div class="t" style="left:671.39px;top:538px;font-size:11px;font-weight:400;color:#111;letter-spacing:0.198px;">-0.138797</div>
<div class="t" style="left:746.64px;top:538px;font-size:11px;font-weight:400;color:#111;letter-spacing:0.164px;">0.126465</div>
<div class="t" style="left:808.39px;top:538px;font-size:11px;font-weight:400;color:#111;letter-spacing:0.164px;">0.001457</div>
<div class="t" style="left:222.00px;top:554px;font-size:10px;font-weight:400;color:#444;letter-spacing:-0.523px;">71</div>
<div class="t" style="left:268.97px;top:553px;font-size:11px;font-weight:400;color:#111;letter-spacing:0.498px;">219</div>
<div class="t" style="left:330.44px;top:553px;font-size:11px;font-weight:400;color:#111;letter-spacing:0.134px;">216.518439</div>
<div class="t" style="left:418.14px;top:553px;font-size:11px;font-weight:400;color:#111;letter-spacing:0.164px;">2.481561</div>
<div class="t" style="left:505.69px;top:553px;font-size:11px;font-weight:400;color:#111;letter-spacing:0.164px;">0.617355</div>
<div class="t" style="left:591.49px;top:553px;font-size:11px;font-weight:400;color:#111;letter-spacing:0.164px;">0.670192</div>
<div class="t" style="left:673.44px;top:553px;font-size:11px;font-weight:400;color:#111;letter-spacing:0.164px;">0.661956</div>
<div class="t" style="left:746.64px;top:553px;font-size:11px;font-weight:400;color:#111;letter-spacing:0.164px;">0.151461</div>
<div class="t" style="left:808.39px;top:553px;font-size:11px;font-weight:400;color:#111;letter-spacing:0.164px;">0.040086</div>
<div class="r" style="left:863px;top:134px;width:16px;height:434px;background:#fff;"></div>
<div class="r" style="left:863px;top:400px;width:16px;height:152px;background:#d1d1d1;"></div>
<div class="r" style="left:219px;top:568px;width:660px;height:16px;background:#fff;"></div>
<div class="r" style="left:234px;top:568px;width:477px;height:16px;background:#d1d1d1;"></div>
<svg style="left:0;top:0" width="880" height="585" viewBox="0 0 880 585"><path d="M868.1 143.5 L870.85 139.3 L873.6 143.5 Z" fill="#585858"/><path d="M868.1 558.7 L870.85 562.9 L873.6 558.7 Z" fill="#585858"/><path d="M228 572.9 L223.9 575.75 L228 578.6 Z" fill="#585858"/><path d="M853.8 572.9 L857.9 575.75 L853.8 578.6 Z" fill="#585858"/></svg>
<svg style="left:0;top:0" width="880" height="585" viewBox="0 0 880 585"><rect x="861.9" y="133.6" width="1.45" height="434.4" fill="#000"/><rect x="237" y="566.5" width="626.3" height="1.5" fill="#000"/></svg>
<div class="r" style="left:0px;top:0px;width:880px;height:1px;background:#526b71;"></div>
<div class="r" style="left:0px;top:0px;width:1px;height:585px;background:#526b71;"></div>
<div class="r" style="left:878px;top:0px;width:1px;height:585px;background:#aab6b9;"></div>
<div class="r" style="left:879px;top:0px;width:1px;height:585px;background:#526b71;"></div>
<div class="r" style="left:0px;top:583px;width:32px;height:1px;background:#e3e7e8;"></div>
<div class="r" style="left:32px;top:583px;width:848px;height:1px;background:#cfd6d8;"></div>
<div class="r" style="left:0px;top:584px;width:880px;height:1px;background:#526b71;"></div>
</body></html>
